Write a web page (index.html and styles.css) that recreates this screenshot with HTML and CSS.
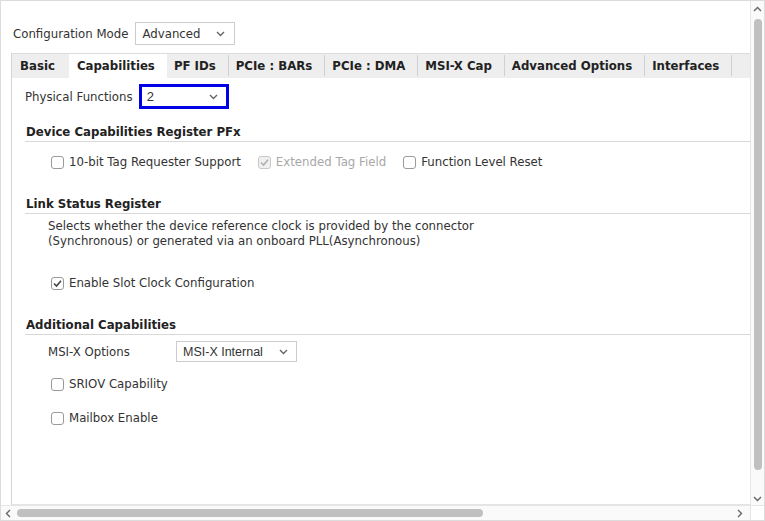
FILE: index.html
```html
<!DOCTYPE html>
<html lang="en">
<head>
  <meta charset="UTF-8">
  <title>Customize IP - Capabilities</title>
  <link rel="stylesheet" href="styles.css">
</head>
<body>
  <div class="window">
    <div class="main">
      <div class="content">
        <div class="mode-row">
          <span class="label">Configuration Mode</span>
          <div class="select mode-select">
            <span>Advanced</span>
            <svg class="chev" width="9" height="6" viewBox="0 0 9 6"><path d="M1 1 L4.5 4.5 L8 1" fill="none" stroke="#666" stroke-width="1.4"/></svg>
          </div>
        </div>

        <div class="tab-panel">
          <div class="tab-bar">
            <div class="tab">Basic</div>
            <div class="tab active">Capabilities</div>
            <div class="tab">PF IDs</div>
            <div class="tab">PCIe : BARs</div>
            <div class="tab">PCIe : DMA</div>
            <div class="tab">MSI-X Cap</div>
            <div class="tab">Advanced Options</div>
            <div class="tab">Interfaces</div>
          </div>

          <div class="panel-body">
            <div class="pf-row">
              <span class="label">Physical Functions</span>
              <div class="select pf-select">
                <span>2</span>
                <svg class="chev" width="9" height="6" viewBox="0 0 9 6"><path d="M1 1 L4.5 4.5 L8 1" fill="none" stroke="#666" stroke-width="1.4"/></svg>
              </div>
            </div>

            <div class="section-head first">Device Capabilities Register PFx</div>
            <div class="check-row tag-row">
              <label class="check"><span class="box"></span>10-bit Tag Requester Support</label>
              <label class="check disabled"><span class="box checked">
                <svg width="11" height="11" viewBox="0 0 11 11"><path d="M2 5.5 L4.5 8 L9 2.8" fill="none" stroke="#b0b0b0" stroke-width="1.6"/></svg>
              </span>Extended Tag Field</label>
              <label class="check"><span class="box"></span>Function Level Reset</label>
            </div>

            <div class="section-head">Link Status Register</div>
            <p class="desc">Selects whether the device reference clock is provided by the connector<br>(Synchronous) or generated via an onboard PLL(Asynchronous)</p>
            <div class="check-row slot-row">
              <label class="check"><span class="box checked">
                <svg width="11" height="11" viewBox="0 0 11 11"><path d="M2 5.5 L4.5 8 L9 2.8" fill="none" stroke="#444" stroke-width="1.6"/></svg>
              </span>Enable Slot Clock Configuration</label>
            </div>

            <div class="section-head">Additional Capabilities</div>
            <div class="msix-row">
              <span class="label msix-label">MSI-X Options</span>
              <div class="select msix-select">
                <span>MSI-X Internal</span>
                <svg class="chev" width="9" height="6" viewBox="0 0 9 6"><path d="M1 1 L4.5 4.5 L8 1" fill="none" stroke="#666" stroke-width="1.4"/></svg>
              </div>
            </div>
            <div class="check-row sriov-row">
              <label class="check"><span class="box"></span>SRIOV Capability</label>
            </div>
            <div class="check-row mailbox-row">
              <label class="check"><span class="box"></span>Mailbox Enable</label>
            </div>
          </div>
        </div>
      </div>

      <div class="vscroll">
        <svg class="arrow-up" width="9" height="6" viewBox="0 0 9 6"><path d="M1 5 L4.5 1.5 L8 5" fill="none" stroke="#666" stroke-width="1.4"/></svg>
        <div class="vtrack"><div class="vthumb"></div></div>
        <svg class="arrow-down" width="9" height="6" viewBox="0 0 9 6"><path d="M1 1 L4.5 4.5 L8 1" fill="none" stroke="#666" stroke-width="1.4"/></svg>
      </div>
    </div>

    <div class="hscroll">
      <svg class="arrow-left" width="6" height="9" viewBox="0 0 6 9"><path d="M5 1 L1.5 4.5 L5 8" fill="none" stroke="#666" stroke-width="1.4"/></svg>
      <div class="htrack"><div class="hthumb"></div></div>
      <svg class="arrow-right" width="6" height="9" viewBox="0 0 6 9"><path d="M1 1 L4.5 4.5 L1 8" fill="none" stroke="#666" stroke-width="1.4"/></svg>
      <div class="corner"></div>
    </div>
  </div>
</body>
</html>
```

FILE: styles.css
```css
* {
  box-sizing: border-box;
}
body {
  margin: 0;
  background-color: #ffffff;
  color: #333333;
  font-family: "DejaVu Sans", Verdana, sans-serif;
  font-size: 11.75px;
}
.window {
  width: 765px;
  height: 521px;
  border: 1px solid #dcdcdc;
  display: flex;
  flex-direction: column;
  background-color: #ffffff;
}
.main {
  flex: 1;
  display: flex;
  min-height: 0;
}
.content {
  flex: 1;
  display: flex;
  flex-direction: column;
  min-width: 0;
}
.mode-row {
  display: flex;
  align-items: center;
  gap: 7px;
  padding: 21px 0 0 12px;
  height: 44px;
}
.label {
  white-space: nowrap;
}
.select {
  display: flex;
  align-items: center;
  justify-content: space-between;
  border: 1px solid #cccccc;
  background-color: #ffffff;
  padding: 0 9px 0 6px;
}
.mode-select {
  width: 100px;
  height: 23px;
}
.chev {
  flex: none;
}

.tab-panel {
  flex: 1;
  margin: 8px 0 0 10px;
  border-left: 1px solid #d4d4d4;
  border-bottom: 1px solid #e4e4e4;
  display: flex;
  flex-direction: column;
}
.tab-bar {
  display: flex;
  height: 25px;
  background-color: #eeeeee;
  border-top: 1px solid #dcdcdc;
}
.tab {
  font-weight: bold;
  color: #222222;
  padding: 0 12px 0 7px;
  display: flex;
  align-items: center;
  border-right: 1px solid #d0d0d0;
  margin: 1px 0 2px;
  white-space: nowrap;
}
.tab.active {
  background-color: #ffffff;
  margin: -1px 0 0 1px;
  border-right: none;
  padding: 0 12px 0 8px;
  border-top: 1px solid #dcdcdc;
}
.tab:first-child {
  border-right: none;
  padding: 0 13px 0 8px;
}

.panel-body {
  flex: 1;
  padding-left: 13px;
}
.pf-row {
  display: flex;
  align-items: center;
  gap: 6px;
  margin-top: 6px;
  height: 25px;
}
.pf-select {
  width: 90px;
  height: 25px;
  border: 3px solid #0000e6;
  padding: 0 8px 0 5px;
  font-family: "Liberation Sans", Arial, sans-serif;
  font-size: 13px;
}
.section-head {
  font-weight: bold;
  color: #222222;
  line-height: 16px;
  padding: 0 0 1px 1px;
  border-bottom: 1px solid #d8d8d8;
  margin-top: 25px;
}
.section-head.first {
  margin-top: 15px;
}
.check-row {
  display: flex;
  align-items: center;
  gap: 17px;
  padding-left: 26px;
  height: 18px;
}
.tag-row {
  margin-top: 11px;
}
.check {
  display: flex;
  align-items: center;
  gap: 5px;
  white-space: nowrap;
}
.check.disabled {
  color: #a8a8a8;
}
.box {
  width: 13px;
  height: 13px;
  border: 1px solid #9a9a9a;
  border-radius: 3px;
  background-color: #ffffff;
  display: flex;
  align-items: center;
  justify-content: center;
  flex: none;
}
.check.disabled .box {
  border-color: #c8c8c8;
  background-color: #f0f0f0;
}
.desc {
  margin: 5px 0 0 23px;
  line-height: 15px;
}
.slot-row {
  margin-top: 25px;
}
.msix-row {
  display: flex;
  align-items: center;
  padding-left: 23px;
  margin-top: 6px;
  height: 21px;
}
.msix-label {
  width: 128px;
}
.msix-select {
  width: 121px;
  height: 21px;
  padding: 0 8px 0 6px;
  font-family: "Liberation Sans", Arial, sans-serif;
  font-size: 12.5px;
}
.sriov-row {
  margin-top: 13px;
}
.mailbox-row {
  margin-top: 16px;
}

.vscroll {
  width: 14px;
  display: flex;
  flex-direction: column;
  align-items: center;
  border-left: 1px solid #e6e6e6;
  background-color: #fafafa;
  padding: 5px 0 3px;
}
.vtrack {
  flex: 1;
  width: 8px;
  padding: 7px 0 26px;
  margin: 0 0 0 1px;
}
.vthumb {
  height: 100%;
  background-color: #c0c0c0;
  border-radius: 4px;
}
.hscroll {
  height: 15px;
  display: flex;
  align-items: center;
  border-top: 1px solid #e6e6e6;
  background-color: #fafafa;
  padding-left: 4px;
}
.htrack {
  flex: 1;
  height: 8px;
  padding: 0 254px 0 6px;
}
.hthumb {
  height: 100%;
  background-color: #c0c0c0;
  border-radius: 4px;
}
.arrow-right {
  margin-right: 7px;
}
.corner {
  width: 14px;
  height: 100%;
  background-color: #ffffff;
  border-left: 1px solid #e6e6e6;
}
```
